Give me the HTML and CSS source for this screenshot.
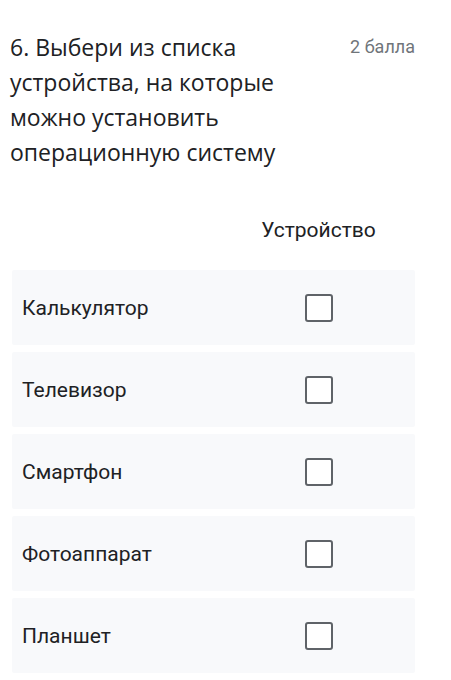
FILE: index.html
```html
<!DOCTYPE html>
<html lang="ru">
<head>
  <meta charset="UTF-8">
  <meta name="viewport" content="width=device-width, initial-scale=1.0">
  <title>Вопрос 6</title>
  <link rel="stylesheet" href="styles.css">
</head>
<body>
  <div class="question">
    <div class="question-header">
      <div class="question-title">6. Выбери из списка устройства, на которые можно установить операционную систему</div>
      <div class="points">2 балла</div>
    </div>

    <div class="grid">
      <div class="grid-head">
        <div></div>
        <div class="col-title">Устройство</div>
      </div>
      <div class="grid-row">
        <div class="row-label">Калькулятор</div>
        <div class="cell"><span class="checkbox"></span></div>
      </div>
      <div class="grid-row">
        <div class="row-label">Телевизор</div>
        <div class="cell"><span class="checkbox"></span></div>
      </div>
      <div class="grid-row">
        <div class="row-label">Смартфон</div>
        <div class="cell"><span class="checkbox"></span></div>
      </div>
      <div class="grid-row">
        <div class="row-label">Фотоаппарат</div>
        <div class="cell"><span class="checkbox"></span></div>
      </div>
      <div class="grid-row">
        <div class="row-label">Планшет</div>
        <div class="cell"><span class="checkbox"></span></div>
      </div>
    </div>
  </div>
</body>
</html>
```

FILE: styles.css
```css
body {
  margin: 0;
  padding: 0;
  background-color: #fff;
  font-family: Roboto, "Noto Sans", sans-serif;
  color: #202124;
}

.question {
  padding: 30px 36px 0 10px;
}

.question-header {
  display: flex;
  justify-content: space-between;
  align-items: flex-start;
}

.question-title {
  width: 310px;
  font-family: "Open Sans", "Noto Sans", sans-serif;
  font-size: 23px;
  line-height: 35px;
  color: #202124;
}

.points {
  font-size: 18px;
  line-height: 24px;
  margin-top: 5px;
  color: #70757a;
}

.grid {
  margin-top: 46px;
}

.grid-head,
.grid-row {
  display: grid;
  grid-template-columns: 210px 1fr;
  margin-left: 2px;
}

.col-title {
  text-align: center;
  font-size: 21px;
  line-height: 28px;
  padding-bottom: 26px;
}

.grid-row {
  height: 75px;
  margin-bottom: 7px;
  background-color: #f8f9fb;
  border-radius: 2px;
}

.row-label {
  display: flex;
  align-items: center;
  padding-left: 10px;
  font-size: 21px;
}

.cell {
  display: flex;
  align-items: center;
  justify-content: center;
}

.checkbox {
  width: 24px;
  height: 24px;
  border: 2.5px solid #5f6368;
  border-radius: 3px;
  background-color: #fff;
}
```
